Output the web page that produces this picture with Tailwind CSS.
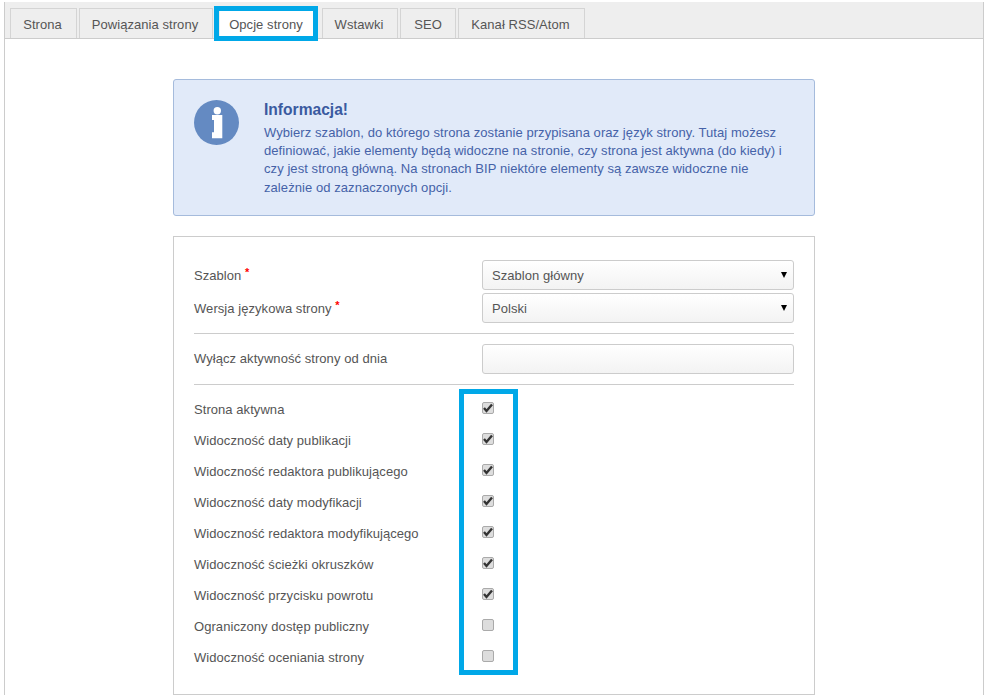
<!doctype html>
<html lang="pl">
  <head>
    <meta charset="UTF-8" />
    <title>Opcje strony</title>
    <script src="https://cdn.jsdelivr.net/npm/@tailwindcss/browser@4"></script>
  </head>

  <body class="bg-white font-['Liberation_Sans',Arial,sans-serif] text-[13px] tracking-[0.06px] text-[#555]">
    <div class="relative h-[695px] w-[984px] overflow-hidden pt-[2px]">
      <!-- panel -->
      <div class="ml-[4px] h-[693px] w-[980px] border-x border-[#ccc]">
        <!-- tabs -->
        <div class="flex h-[37px] items-end gap-[2px] border-b border-[#ccc] bg-[#eee] pl-[5px] text-[13px]">
          <a class="flex h-[30px] w-[67px] items-center justify-center border border-b-0 border-[#d4d4d4] pr-[2px] pt-[2px]">Strona</a>
          <a class="flex h-[30px] w-[134px] items-center justify-center border border-b-0 border-[#d4d4d4] pr-[2px] pt-[2px]">Powiązania strony</a>
          <a class="relative top-px ml-[5px] flex h-[30px] w-[94px] items-center justify-center bg-white pr-[2px] pt-[2px]">Opcje strony</a>
          <a class="ml-[6px] flex h-[30px] w-[76px] items-center justify-center border border-b-0 border-[#d4d4d4] pr-[2px] pt-[2px]">Wstawki</a>
          <a class="flex h-[30px] w-[56px] items-center justify-center border border-b-0 border-[#d4d4d4] pt-[2px]">SEO</a>
          <a class="flex h-[30px] w-[127px] items-center justify-center border border-b-0 border-[#d4d4d4] pr-[2px] pt-[2px]">Kanał RSS/Atom</a>
        </div>

        <div class="ml-[168px] w-[642px] pt-[40px]">
          <!-- alert -->
          <div class="flex h-[137px] rounded-[3px] border border-[#a5bbdc] bg-[#e1eaf9] pl-[20px] pt-[20px]">
            <svg class="h-[45px] w-[45px] shrink-0" viewBox="0 0 45 45">
              <circle cx="22.5" cy="22.5" r="22.5" fill="#648ac2" />
              <circle cx="23.3" cy="10.7" r="3.7" fill="#fff" />
              <path d="M18 15h10.3v23.3H18v-6h2V20h-2z" fill="#fff" />
            </svg>
            <div class="ml-[25px] w-[530px] text-[#4562a8]">
              <h4 class="text-[15.6px] leading-[20px] font-bold tracking-normal text-[#3a5aa0]">Informacja!</h4>
              <p class="mt-[4px] text-[13px] leading-[18.2px] tracking-[0.07px]">Wybierz szablon, do którego strona zostanie przypisana oraz język strony. Tutaj możesz definiować, jakie elementy będą widoczne na stronie, czy strona jest aktywna (do kiedy) i czy jest stroną główną. Na stronach BIP niektóre elementy są zawsze widoczne nie zależnie od zaznaczonych opcji.</p>
            </div>
          </div>

          <!-- form -->
          <div class="mt-[20px] h-[459px] border border-[#ccc] px-[20px] pt-[23px]">
            <div class="flex h-[30px] items-center justify-between">
              <label class="pt-[2px]">Szablon <span class="relative -top-[4px] text-[11px] font-bold text-[#f00]">*</span></label>
              <div class="flex h-[30px] w-[312px] items-center justify-between rounded-[3px] border border-[#ccc] bg-gradient-to-b from-white to-[#f3f3f3] pl-[9px] pr-[6px]">
                <span class="pt-[2px]">Szablon główny</span> <span class="border-x-[3px] border-t-[6px] border-x-transparent border-t-black"></span>
              </div>
            </div>
            <div class="mt-[3px] flex h-[30px] items-center justify-between">
              <label class="pt-[2px]">Wersja językowa strony <span class="relative -top-[4px] text-[11px] font-bold text-[#f00]">*</span></label>
              <div class="flex h-[30px] w-[312px] items-center justify-between rounded-[3px] border border-[#ccc] bg-gradient-to-b from-white to-[#f3f3f3] pl-[9px] pr-[6px]">
                <span class="pt-[2px]">Polski</span> <span class="border-x-[3px] border-t-[6px] border-x-transparent border-t-black"></span>
              </div>
            </div>
            <hr class="mt-[10px] border-[#ccc]" />
            <div class="mt-[10px] flex h-[30px] items-center justify-between">
              <label>Wyłącz aktywność strony od dnia</label>
              <div class="h-[30px] w-[312px] rounded-[3px] border border-[#ccc] bg-gradient-to-b from-white to-[#f3f3f3]"></div>
            </div>
            <hr class="mt-[10px] border-[#ccc]" />

            <!-- checkboxes -->
            <div class="mt-[9px]">
              <div class="flex h-[31px] items-center"><label class="w-[288px]">Strona aktywna</label><span class="mb-[3px] flex h-[12px] w-[12px] items-center justify-center rounded-[2px] border border-[#aaa] bg-[#ddd]"><svg class="h-[10px] w-[10px]" viewBox="0 0 10 10"><path d="M1 5l2.5 3L9 1.5" fill="none" stroke="#333" stroke-width="2.4" /></svg></span></div>
              <div class="flex h-[31px] items-center"><label class="w-[288px]">Widoczność daty publikacji</label><span class="mb-[3px] flex h-[12px] w-[12px] items-center justify-center rounded-[2px] border border-[#aaa] bg-[#ddd]"><svg class="h-[10px] w-[10px]" viewBox="0 0 10 10"><path d="M1 5l2.5 3L9 1.5" fill="none" stroke="#333" stroke-width="2.4" /></svg></span></div>
              <div class="flex h-[31px] items-center"><label class="w-[288px]">Widoczność redaktora publikującego</label><span class="mb-[3px] flex h-[12px] w-[12px] items-center justify-center rounded-[2px] border border-[#aaa] bg-[#ddd]"><svg class="h-[10px] w-[10px]" viewBox="0 0 10 10"><path d="M1 5l2.5 3L9 1.5" fill="none" stroke="#333" stroke-width="2.4" /></svg></span></div>
              <div class="flex h-[31px] items-center"><label class="w-[288px]">Widoczność daty modyfikacji</label><span class="mb-[3px] flex h-[12px] w-[12px] items-center justify-center rounded-[2px] border border-[#aaa] bg-[#ddd]"><svg class="h-[10px] w-[10px]" viewBox="0 0 10 10"><path d="M1 5l2.5 3L9 1.5" fill="none" stroke="#333" stroke-width="2.4" /></svg></span></div>
              <div class="flex h-[31px] items-center"><label class="w-[288px]">Widoczność redaktora modyfikującego</label><span class="mb-[3px] flex h-[12px] w-[12px] items-center justify-center rounded-[2px] border border-[#aaa] bg-[#ddd]"><svg class="h-[10px] w-[10px]" viewBox="0 0 10 10"><path d="M1 5l2.5 3L9 1.5" fill="none" stroke="#333" stroke-width="2.4" /></svg></span></div>
              <div class="flex h-[31px] items-center"><label class="w-[288px]">Widoczność ścieżki okruszków</label><span class="mb-[3px] flex h-[12px] w-[12px] items-center justify-center rounded-[2px] border border-[#aaa] bg-[#ddd]"><svg class="h-[10px] w-[10px]" viewBox="0 0 10 10"><path d="M1 5l2.5 3L9 1.5" fill="none" stroke="#333" stroke-width="2.4" /></svg></span></div>
              <div class="flex h-[31px] items-center"><label class="w-[288px]">Widoczność przycisku powrotu</label><span class="mb-[3px] flex h-[12px] w-[12px] items-center justify-center rounded-[2px] border border-[#aaa] bg-[#ddd]"><svg class="h-[10px] w-[10px]" viewBox="0 0 10 10"><path d="M1 5l2.5 3L9 1.5" fill="none" stroke="#333" stroke-width="2.4" /></svg></span></div>
              <div class="flex h-[31px] items-center"><label class="w-[288px]">Ograniczony dostęp publiczny</label><span class="mb-[3px] h-[12px] w-[12px] rounded-[2px] border border-[#aaa] bg-[#ddd]"></span></div>
              <div class="flex h-[31px] items-center"><label class="w-[288px]">Widoczność oceniania strony</label><span class="mb-[3px] h-[12px] w-[12px] rounded-[2px] border border-[#aaa] bg-[#ddd]"></span></div>
            </div>
          </div>
        </div>
      </div>

      <!-- cyan highlight frames -->
      <div class="absolute left-[214px] top-[6px] h-[35px] w-[104px] border-[5px] border-[#00a8e8]"></div>
      <div class="absolute left-[459px] top-[389px] h-[286px] w-[59px] border-[5px] border-[#00a8e8]"></div>
    </div>
  </body>
</html>
